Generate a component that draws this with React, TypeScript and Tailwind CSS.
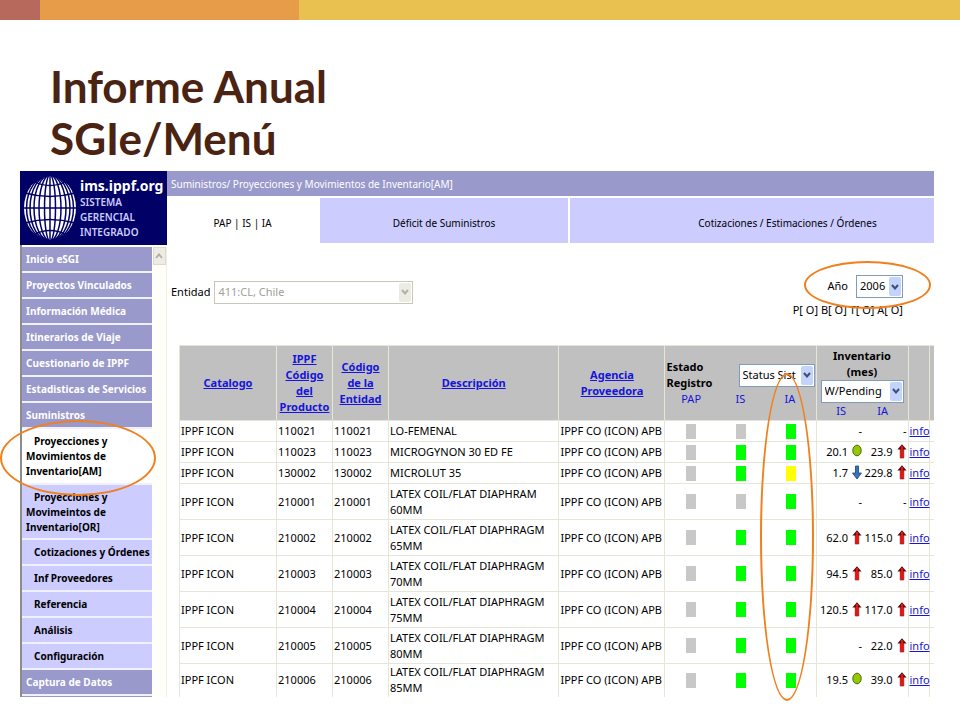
import type { ReactNode } from "react";

type Trend = "up" | "down" | "ok" | "";

interface Product {
    code: string;
    name: string;
    is: string;
    ia: string;
    stockIs: string;
    trendIs: Trend;
    stockIa: string;
    trendIa: Trend;
}

const products: Product[] = [
    { code: "110021", name: "LO-FEMENAL", is: "gray", ia: "green", stockIs: "-", trendIs: "", stockIa: "-", trendIa: "" },
    { code: "110023", name: "MICROGYNON 30 ED FE", is: "green", ia: "green", stockIs: "20.1", trendIs: "ok", stockIa: "23.9", trendIa: "up" },
    { code: "130002", name: "MICROLUT 35", is: "green", ia: "yellow", stockIs: "1.7", trendIs: "down", stockIa: "229.8", trendIa: "up" },
    { code: "210001", name: "LATEX COIL/FLAT DIAPHRAM 60MM", is: "gray", ia: "green", stockIs: "-", trendIs: "", stockIa: "-", trendIa: "" },
    { code: "210002", name: "LATEX COIL/FLAT DIAPHRAGM 65MM", is: "green", ia: "green", stockIs: "62.0", trendIs: "up", stockIa: "115.0", trendIa: "up" },
    { code: "210003", name: "LATEX COIL/FLAT DIAPHRAGM 70MM", is: "green", ia: "green", stockIs: "94.5", trendIs: "up", stockIa: "85.0", trendIa: "up" },
    { code: "210004", name: "LATEX COIL/FLAT DIAPHRAGM 75MM", is: "green", ia: "green", stockIs: "120.5", trendIs: "up", stockIa: "117.0", trendIa: "up" },
    { code: "210005", name: "LATEX COIL/FLAT DIAPHRAGM 80MM", is: "green", ia: "green", stockIs: "-", trendIs: "", stockIa: "22.0", trendIa: "up" },
    { code: "210006", name: "LATEX COIL/FLAT DIAPHRAGM 85MM", is: "green", ia: "green", stockIs: "19.5", trendIs: "ok", stockIa: "39.0", trendIa: "up" },
];

const topMenu = ["Inicio eSGI", "Proyectos Vinculados", "Información Médica", "Itinerarios de Viaje", "Cuestionario de IPPF", "Estadisticas de Servicios", "Suministros"];
const subMenu = ["Cotizaciones y Órdenes", "Inf Proveedores", "Referencia", "Análisis", "Configuración"];

const statusColors: Record<string, string> = {
    gray: "bg-[#c8c8c8]",
    green: "bg-[#00ff00]",
    yellow: "bg-[#ffff00]",
};

function Globe() {
    return (
        <svg viewBox="0 0 54 66" className="w-[54px] h-[66px] shrink-0" aria-hidden="true">
            <ellipse cx="27" cy="33" rx="26" ry="32" fill="#fff" />
            <g fill="none" stroke="#000066" strokeWidth="1.5">
                <path d="M27 0V66" />
                <ellipse cx="27" cy="33" rx="5.500" ry="33" />
                <ellipse cx="27" cy="33" rx="11" ry="33" />
                <ellipse cx="27" cy="33" rx="16" ry="33" />
                <ellipse cx="27" cy="33" rx="20" ry="33" />
                <ellipse cx="27" cy="33" rx="23.500" ry="33" />
                <path d="M10 6Q27 15 44 6M2 18Q27 25 52 18M0 33H54M2 48Q27 41 52 48M10 60Q27 51 44 60" strokeWidth="1.300" />
            </g>
        </svg>
    );
}

function TrendIcon({ trend }: { trend: Trend }) {
    if (trend === "") return null;
    return (
        <svg viewBox="0 0 10 15" className="w-[10px] h-[15px] shrink-0" aria-hidden="true">
            {trend === "up" && (
                <>
                    <path d="M3.200 4H6.800V14H3.200Z" fill="#e01414" stroke="#8c1010" strokeWidth=".6" />
                    <path d="M5 .3L9.600 5.600H.4Z" fill="#481010" />
                    <path d="M5 2V13.500" stroke="#e81414" strokeWidth="2.400" />
                </>
            )}
            {trend === "down" && <path d="M3.500 1H6.500V8H9.500L5 14L.5 8H3.500Z" fill="#3474b8" stroke="#1c4478" strokeWidth=".8" />}
            {trend === "ok" && <ellipse cx="5" cy="6.500" rx="4.200" ry="5.300" fill="#96c800" stroke="#48640a" />}
        </svg>
    );
}

function Ring({ className }: { className: string }) {
    return <span className={"absolute z-10 rounded-[50%] border-2 border-[#f0801e] pointer-events-none " + className} />;
}

interface SelectBoxProps {
    id: string;
    value: string;
    label?: string;
    className: string;
    disabled?: boolean;
}

function SelectBox({ id, value, label, className, disabled }: SelectBoxProps) {
    return (
        <div className={"relative h-[23px] " + className}>
            <select
                id={id}
                aria-label={label}
                disabled={disabled}
                className={"appearance-none w-full h-full border px-[3px] text-[11px] font-normal bg-white " + (disabled ? "border-[#c9c7ba] text-[#a0a098]" : "border-[#7f9db9] text-black")}
            >
                <option>{value}</option>
            </select>
            <span className={"absolute right-[2px] inset-y-[2px] w-3 rounded-[2px] flex items-center justify-center pointer-events-none " + (disabled ? "bg-[#ecebe4] text-[#b4b2a4]" : "bg-[#c3d3fb] text-[#3c5078]")}>
                <svg viewBox="0 0 8 6" className="w-2 h-[6px]" fill="none" stroke="currentColor" strokeWidth="2" aria-hidden="true">
                    <path d="M1 1L4 4.500L7 1" />
                </svg>
            </span>
        </div>
    );
}

function HeadCell({ children }: { children: ReactNode }) {
    return (
        <th className="border border-[#e6e6d8] px-px text-center align-middle font-bold">
            <a href="#" className="text-[#1414dc] underline">{children}</a>
        </th>
    );
}

function Status({ color }: { color: string }) {
    return <span className={"block mx-auto w-[10px] h-[15px] " + statusColors[color]} />;
}

function Sidebar() {
    return (
        <aside className="w-[147px] shrink-0">
            <div className="h-[74px] bg-[#000066] flex items-center pl-[3px] gap-[3px]">
                <Globe />
                <div className="text-white text-[10px] leading-[15px] font-semibold">
                    <div className="text-[14px] leading-[19px] font-bold">ims.ippf.org</div>
                    <div className="text-[#ccccff]">SISTEMA</div>
                    <div className="text-[#ccccff]">GERENCIAL</div>
                    <div className="text-[#ccccff]">INTEGRADO</div>
                </div>
            </div>
            <div className="flex border-l-2 border-[#8c8c8c] bg-[#fffffa] pt-[2px]">
                <nav className="grow min-w-0 border-b border-[#9999cc]">
                    <ul className="text-[10px] leading-[15px] font-bold bg-[#f0f0ff] flex flex-col gap-[2px] pb-[2px]">
                        {topMenu.map((item) => (
                            <li key={item} className="bg-[#9999cc] h-6 pl-1 py-[5px] text-white whitespace-nowrap">
                                <a href="#">{item}</a>
                            </li>
                        ))}
                        <li className="relative bg-white px-1 py-[5px] h-[54px]">
                            <a href="#" className="block indent-2">Proyecciones y<br />Movimientos de<br />Inventario[AM]</a>
                            <Ring className="-left-[22px] -top-[9px] w-[156px] h-[76px]" />
                        </li>
                        <li className="bg-[#ccccff] px-1 py-[5px] h-[53px]">
                            <a href="#" className="block indent-2">Proyecciones y<br />Movimeintos de<br />Inventario[OR]</a>
                        </li>
                        {subMenu.map((item) => (
                            <li key={item} className="bg-[#ccccff] h-6 pl-3 py-[5px] whitespace-nowrap">
                                <a href="#">{item}</a>
                            </li>
                        ))}
                        <li className="bg-[#9999cc] h-6 px-1 py-[5px] text-white">
                            <a href="#">Captura de Datos</a>
                        </li>
                    </ul>
                </nav>
                <div className="w-[15px] shrink-0 border-r border-[#efefe2] flex justify-center items-start">
                    <button aria-label="Subir" className="w-[13px] h-[18px] bg-[#ecebe4] border border-[#dcdacd] flex items-center justify-center text-[#b0ae9e]">
                        <svg viewBox="0 0 8 6" className="w-2 h-[6px]" fill="none" stroke="currentColor" strokeWidth="1.800" aria-hidden="true">
                            <path d="M1 5L4 1.500L7 5" />
                        </svg>
                    </button>
                </div>
            </div>
        </aside>
    );
}

function InventoryTable() {
    const cell = "border border-[#e6e6d8] px-px ";
    // the status and stock groups have no full vertical rules between their columns
    const statusCell = "border-y border-[#e6e6d8] px-px ";
    return (
        <table className="w-full table-fixed border-collapse text-[11px] leading-4">
            <colgroup>
                <col className="w-[97px]" />
                <col className="w-[56px]" />
                <col className="w-[56px]" />
                <col />
                <col className="w-[106px]" />
                <col className="w-[51px]" />
                <col className="w-[50px]" />
                <col className="w-[50px]" />
                <col className="w-[47px]" />
                <col className="w-[45px]" />
                <col className="w-[21px]" />
                <col className="w-[5px]" />
            </colgroup>
            <thead className="bg-[#c0c0c0]">
                <tr className="h-[75px]">
                    <HeadCell>Catalogo</HeadCell>
                    <HeadCell>IPPF Código del Producto</HeadCell>
                    <HeadCell>Código de la Entidad</HeadCell>
                    <HeadCell>Descripción</HeadCell>
                    <HeadCell>Agencia Proveedora</HeadCell>
                    <th colSpan={3} className={cell + "align-middle"}>
                        <div className="flex items-center justify-between">
                            <span className="text-left w-[60px]">Estado Registro</span>
                            <SelectBox id="status" label="Status" value="Status Sist" className="w-[76px]" />
                        </div>
                        <div className="grid grid-cols-3 font-normal text-[#1414dc]">
                            <span>PAP</span>
                            <span>IS</span>
                            <span>IA</span>
                        </div>
                    </th>
                    <th colSpan={2} className="border border-[#e6e6d8] px-1">
                        <div>Inventario<br />(mes)</div>
                        <SelectBox id="pending" label="Inventario" value="W/Pending" className="w-[83px]" />
                        <div className="grid grid-cols-2 font-normal text-[#1414dc]">
                            <span>IS</span>
                            <span>IA</span>
                        </div>
                    </th>
                    <th className={cell} />
                    <th className={cell + "border-r-0"} />
                </tr>
            </thead>
            <tbody className="[&>tr:last-child>td]:border-b-0">
                {products.map((p, i) => (
                    <tr key={p.code} className={i < 3 ? "h-[21px]" : i === products.length - 1 ? "h-[33px]" : "h-[36px]"}>
                        <td className={cell}>IPPF ICON</td>
                        <td className={cell}>{p.code}</td>
                        <td className={cell}>{p.code}</td>
                        <td className={cell}>{p.name}</td>
                        <td className={cell + "whitespace-nowrap"}>IPPF CO (ICON) APB</td>
                        <td className={statusCell}><Status color="gray" /></td>
                        <td className={statusCell}><Status color={p.is} /></td>
                        <td className={statusCell}><Status color={p.ia} /></td>
                        <td className="border-y border-l border-[#e6e6d8] px-px">
                            <div className="flex justify-end gap-1">{p.stockIs}<TrendIcon trend={p.trendIs} /></div>
                        </td>
                        <td className="border-y border-r border-[#e6e6d8] px-px">
                            <div className="flex justify-end gap-1">{p.stockIa}<TrendIcon trend={p.trendIa} /></div>
                        </td>
                        <td className={cell}><a href="#" className="text-[#1414dc] underline">info</a></td>
                        <td className={cell + "border-r-0"} />
                    </tr>
                ))}
            </tbody>
        </table>
    );
}

export default function App() {
    return (
        <div className="bg-white text-black font-['Noto_Sans',sans-serif] min-h-screen">
            <div className="flex h-5">
                <div className="w-10 bg-[#b76a5c]" />
                <div className="w-[259px] bg-[#e69c48]" />
                <div className="grow bg-[#e8c150]" />
            </div>
            <h1 className="pl-[50px] pt-10 pb-[7px] text-[44px] leading-[52px] font-bold text-[#4a2312] font-['Lato',sans-serif]">
                Informe Anual<br />SGIe/Menú
            </h1>
            <div className="flex pl-5 pr-[26px]">
                <Sidebar />
                <main className="grow min-w-0">
                    <div className="bg-[#9999cc] h-[25px] px-1 text-[10px] leading-[26px] text-white">
                        Suministros/ Proyecciones y Movimientos de Inventario[AM]
                    </div>
                    <div className="flex gap-[2px] mt-[2px] h-[45px] text-[10px]">
                        <button className="w-[151px] bg-white pt-[6px]">PAP | IS | IA</button>
                        <button className="w-[248px] bg-[#ccccff] pt-[6px]">Déficit de Suministros</button>
                        <button className="grow bg-[#ccccff] pt-[6px] pl-[71px]">Cotizaciones / Estimaciones / Órdenes</button>
                    </div>
                    <div className="flex justify-between pl-1 pr-[31px] pt-8 text-[11px]">
                        <div className="flex items-center gap-1 h-[30px] pt-1">
                            <label htmlFor="entidad">Entidad</label>
                            <SelectBox id="entidad" value="411:CL, Chile" className="w-[199px]" disabled />
                        </div>
                        <div className="text-right">
                            <div className="relative flex justify-end items-center gap-2">
                                <label htmlFor="year">Año</label>
                                <SelectBox id="year" value="2006" className="w-[47px]" />
                                <Ring className="-right-[28px] -top-[14px] w-[127px] h-12" />
                            </div>
                            <div className="leading-6">P[ O] B[ O] T[ O] A[ O]</div>
                        </div>
                    </div>
                    <div className="relative pl-3 mt-[23px]">
                        <InventoryTable />
                        <Ring className="right-[120px] top-[28px] w-[54px] h-[328px]" />
                    </div>
                </main>
            </div>
        </div>
    );
}
